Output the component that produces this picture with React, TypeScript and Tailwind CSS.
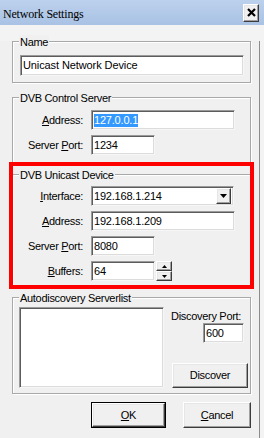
import type { ReactNode } from 'react';

const sunken =
  'bg-white border border-t-[#9a9a9a] border-l-[#9a9a9a] border-r-[#f6f6f6] border-b-[#f6f6f6] shadow-[inset_1px_1px_0_#5c5c5c,inset_-1px_-1px_0_#dcdcdc]';
const raised =
  'bg-[#f0f0f0] border border-t-white border-l-white border-r-[#3c3c3c] border-b-[#3c3c3c] shadow-[inset_-1px_-1px_0_#a0a0a0,inset_1px_1px_0_#e6e6e6]';

function Group({ title, className, children }: { title: string; className: string; children: ReactNode }) {
  return (
    <div className={`relative ml-[12px] w-[239px] border border-[#a8a8a8] shadow-[inset_1px_1px_0_#fff,1px_1px_0_#fff] ${className}`}>
      <span className="absolute -top-[7px] left-[6px] bg-[#f0f0f0] px-[1px] leading-[14px] whitespace-nowrap">{title}</span>
      {children}
    </div>
  );
}

function Row({ label, children }: { label: ReactNode; children: ReactNode }) {
  return (
    <div className="flex items-center h-[20px]">
      <div className="w-[70px] text-right whitespace-nowrap leading-[14px]">{label}</div>
      <div className="ml-[8px] flex">{children}</div>
    </div>
  );
}

function Field({ w, children }: { w: string; children?: ReactNode }) {
  return (
    <div className={`${sunken} ${w} h-[20px] pl-[2px] flex items-center tracking-[-0.2px] leading-[14px] whitespace-nowrap`}>
      {children}
    </div>
  );
}

export default function App() {
  return (
    <div className="relative w-[264px] h-[438px] overflow-hidden bg-[#f3f3f3] text-[11px] tracking-[-0.3px] text-black font-['Liberation_Sans',Arial,sans-serif]">
      {/* title bar */}
      <div className="h-[25px] w-[264px] flex items-center justify-between bg-gradient-to-b from-[#bcd1ec] to-[#a9c2e4]">
        <span className="pl-[3px] pt-[2px] text-[12px] tracking-[-0.2px] [font-family:'Liberation_Serif','Times_New_Roman',serif]">
          Network Settings
        </span>
        <div className={`${raised} mr-[5px] w-[16px] h-[18px] flex items-center justify-center`}>
          <svg width="9" height="9" viewBox="0 0 9 9">
            <path d="M1 1 L8 8 M8 1 L1 8" stroke="#000" strokeWidth="2.2" />
          </svg>
        </div>
      </div>

      <div className="w-[260px] h-[412px] bg-[#f0f0f0] border-r border-b border-[#8c8c8c]">
        <Group title="Name" className="mt-[16px] pt-[13px] pb-[6px] pl-[7px]">
          <div className={`${sunken} w-[224px] h-[21px] pl-[2px] flex items-center tracking-[-0.1px] whitespace-nowrap`}>
            Unicast Network Device
          </div>
        </Group>

        <Group title="DVB Control Server" className="mt-[14px] pt-[12px] pb-[7px] flex flex-col gap-[5px]">
          <Row label={<><u>A</u>ddress:</>}>
            <Field w="w-[144px]">
              <span className="bg-[#3399ff] text-white leading-[13px]">127.0.0.1</span>
            </Field>
          </Row>
          <Row label={<>Server <u>P</u>ort:</>}>
            <Field w="w-[64px]">1234</Field>
          </Row>
        </Group>

        <Group title="DVB Unicast Device" className="mt-[11px] pt-[11px] pb-[6px] flex flex-col gap-[5px]">
          <Row label={<><u>I</u>nterface:</>}>
            <div className={`${sunken} w-[143px] h-[20px] pl-[2px] pr-[2px] flex items-center justify-between tracking-[-0.2px]`}>
              <span>192.168.1.214</span>
              <div className={`${raised} w-[15px] h-[16px] flex items-center justify-center`}>
                <svg width="7" height="4" viewBox="0 0 7 4"><path d="M0 0 L7 0 L3.5 4 Z" fill="#000" /></svg>
              </div>
            </div>
          </Row>
          <Row label={<><u>A</u>ddress:</>}>
            <Field w="w-[144px]">192.168.1.209</Field>
          </Row>
          <Row label={<>Server <u>P</u>ort:</>}>
            <Field w="w-[64px]">8080</Field>
          </Row>
          <Row label={<><u>B</u>uffers:</>}>
            <Field w="w-[64px]">64</Field>
            <div className="ml-[1px] w-[16px] h-[20px] flex flex-col">
              <div className={`${raised} h-[10px] flex items-center justify-center`}>
                <svg width="5" height="3" viewBox="0 0 5 3"><path d="M2.5 0 L5 3 L0 3 Z" fill="#000" /></svg>
              </div>
              <div className={`${raised} h-[10px] flex items-center justify-center`}>
                <svg width="5" height="3" viewBox="0 0 5 3"><path d="M0 0 L5 0 L2.5 3 Z" fill="#000" /></svg>
              </div>
            </div>
          </Row>
        </Group>

        <Group title="Autodiscovery Serverlist" className="mt-[9px] pt-[9px] pb-[5px] pl-[6px] flex">
          <div className={`${sunken} w-[145px] h-[81px]`} />
          <div className="ml-[7px] w-[77px] pt-[2px] flex flex-col">
            <span className="leading-[14px] whitespace-nowrap">Discovery Port:</span>
            <div className={`${sunken} self-end mr-[4px] w-[41px] h-[20px] pl-[2px] flex items-center tracking-[-0.2px]`}>600</div>
            <div className={`${raised} mt-[20px] ml-[1px] w-[76px] h-[25px] flex items-center justify-center`}>Discover</div>
          </div>
        </Group>

        <div className="mt-[8px] pl-[91px] flex gap-[17px]">
          <div className="w-[75px] h-[26px] border border-black flex">
            <div className={`${raised} flex-1 flex items-center justify-center`}>
              <span><u>O</u>K</span>
            </div>
          </div>
          <div className={`${raised} w-[68px] h-[26px] flex items-center justify-center`}>
            <span><u>C</u>ancel</span>
          </div>
        </div>
      </div>

      {/* red highlight annotation */}
      <div className="absolute left-[9px] top-[162px] w-[245px] h-[127px] border-4 border-[#ff0000] pointer-events-none" />
    </div>
  );
}
